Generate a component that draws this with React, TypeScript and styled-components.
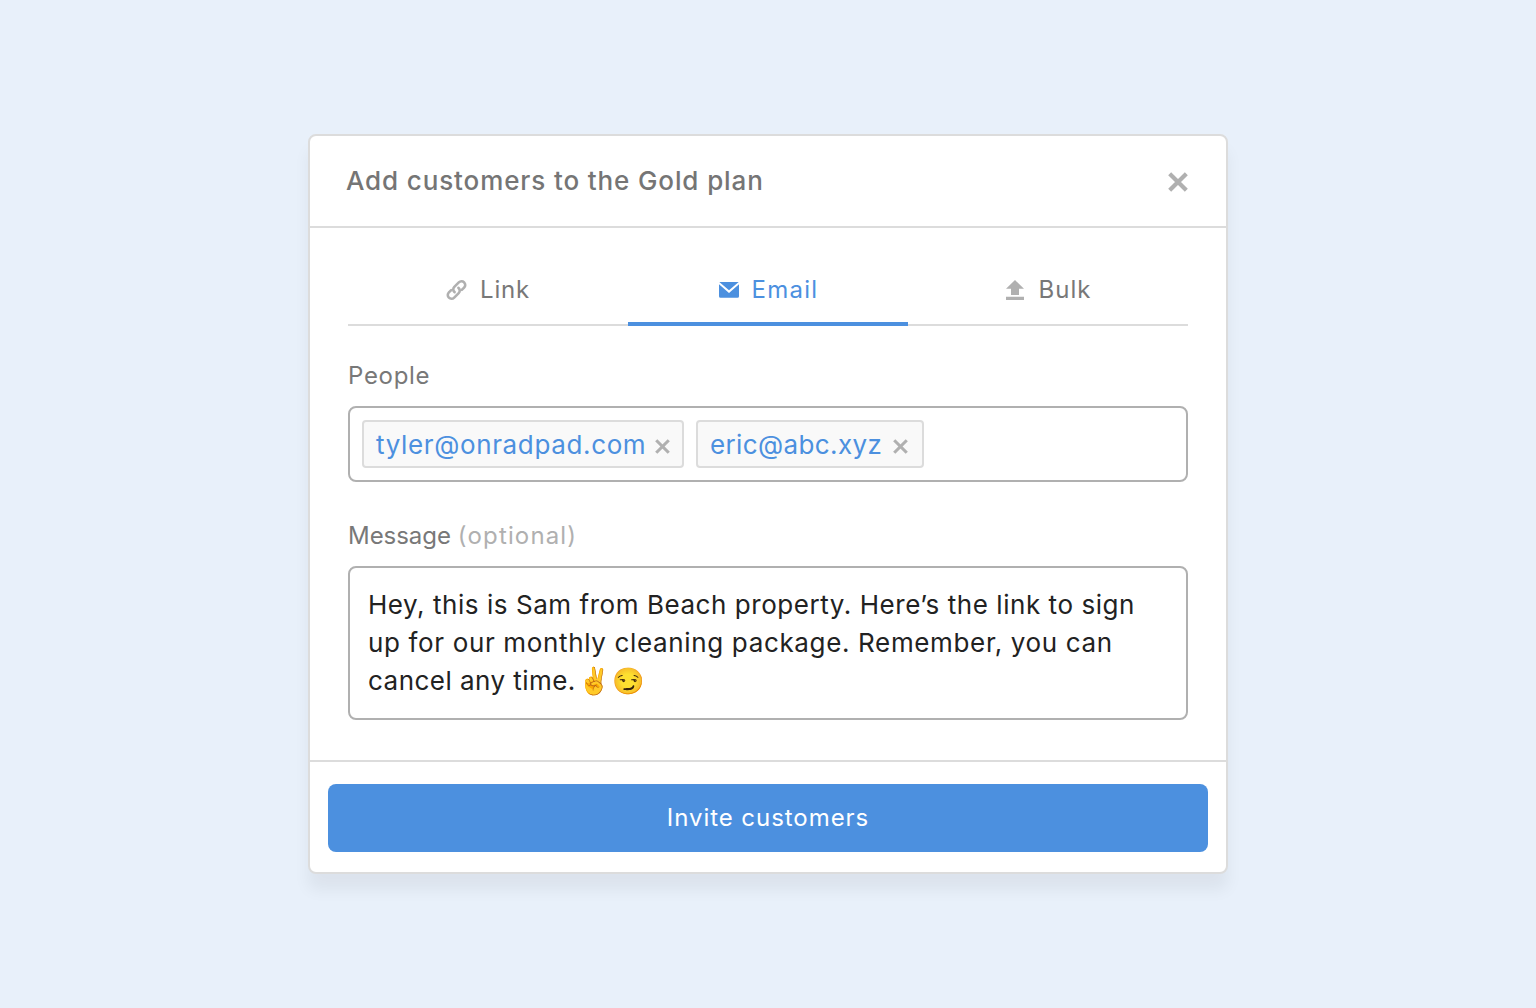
import React, { useState } from "react";
import styled, { createGlobalStyle } from "styled-components";

const blue = "#4c90df";
const gray = "#787878";
const lightGray = "#b0b0b0";
const line = "#dcdcdc";

const GlobalStyle = createGlobalStyle`
  * { box-sizing: border-box; }
  body {
    margin: 0;
    background: #e8f0fa;
    font-family: Inter, "Liberation Sans", "Noto Color Emoji", sans-serif;
    font-weight: 400;
  }
`;

const Page = styled.main`
  min-height: 100vh;
  display: flex;
  align-items: center;
  justify-content: center;
`;

const Modal = styled.section`
  width: 920px;
  border: 2px solid ${line};
  border-radius: 8px;
  background: #fff;
  box-shadow: 0 16px 16px rgba(0, 20, 10, 0.055);
`;

const Header = styled.header`
  display: flex;
  align-items: center;
  justify-content: space-between;
  height: 92px;
  padding: 0 38px 0 36px;
  border-bottom: 2px solid ${line};
`;

const Title = styled.h1`
  margin: 0;
  color: #757575;
  font-size: 26px;
  font-weight: 550;
  letter-spacing: 0.88px;
  line-height: 32px;
`;

const IconButton = styled.button`
  display: flex;
  padding: 0;
  border: 0;
  background: none;
  color: ${lightGray};
  cursor: pointer;
`;

const CloseButton = styled(IconButton)`
  margin-top: 1px;
`;

const Body = styled.div`
  padding: 28px 38px 40px;
`;

const Tabs = styled.nav`
  display: grid;
  grid-template-columns: repeat(3, 1fr);
  height: 70px;
  margin-bottom: 34px;
`;

const Tab = styled.button<{ $active: boolean; $spacing: number }>`
  display: flex;
  align-items: center;
  justify-content: center;
  gap: 12px;
  padding: ${(p) => (p.$active ? "1px 0 0" : "1px 0 2px")};
  border: 0;
  border-bottom: ${(p) => (p.$active ? `4px solid ${blue}` : `2px solid ${line}`)};
  background: none;
  color: ${(p) => (p.$active ? blue : gray)};
  font: 400 24px/32px Inter, "Liberation Sans", sans-serif;
  letter-spacing: ${(p) => p.$spacing}px;
  cursor: pointer;

  svg {
    color: ${(p) => (p.$active ? blue : lightGray)};
  }
`;

const Field = styled.div`
  & + & {
    margin-top: 38px;
  }
`;

const Label = styled.label<{ $spacing: number }>`
  display: flex;
  gap: 7px;
  margin-bottom: 14px;
  color: ${gray};
  font-size: 24px;
  line-height: 32px;
  letter-spacing: ${(p) => p.$spacing}px;
`;

const Optional = styled.span`
  color: ${lightGray};
  letter-spacing: 1.15px;
`;

const TokenInput = styled.div`
  display: flex;
  gap: 12px;
  height: 76px;
  padding: 12px;
  border: 2px solid ${lightGray};
  border-radius: 8px;
`;

const Token = styled.span<{ $width: number; $spacing: number; $end: number }>`
  display: flex;
  align-items: center;
  justify-content: space-between;
  width: ${(p) => p.$width}px;
  padding: 1px ${(p) => p.$end}px 0 12px;
  border: 2px solid ${line};
  border-radius: 4px;
  background: #f9f9f9;
  color: ${blue};
  font-size: 26px;
  line-height: 36px;
  letter-spacing: ${(p) => p.$spacing}px;
  white-space: nowrap;
`;

const TokenRemove = styled(IconButton)`
  margin-top: 3px;
`;

const MessageBox = styled.div`
  height: 154px;
  padding: 18px;
  border: 2px solid ${lightGray};
  border-radius: 8px;
  color: #222;
  font-size: 26px;
  line-height: 38px;
  outline: none;
`;

const MessageLine = styled.div<{ $spacing: number }>`
  height: 38px;
  letter-spacing: ${(p) => p.$spacing}px;
  white-space: nowrap;
`;

const Emoji = styled.span`
  margin-left: 3px;
  font-family: "Noto Color Emoji", sans-serif;
  font-size: 26px;
  line-height: 1;
  letter-spacing: 1px;
`;

const Footer = styled.footer`
  padding: 22px 18px 20px;
  border-top: 2px solid ${line};
`;

const InviteButton = styled.button`
  display: block;
  width: 100%;
  height: 68px;
  padding: 0 0 1px;
  border: 0;
  border-radius: 8px;
  background: ${blue};
  color: #fff;
  font: 400 24px/32px Inter, "Liberation Sans", sans-serif;
  letter-spacing: 0.95px;
  cursor: pointer;
`;

const Cross = ({ size, stroke }: { size: number; stroke: number }) => {
  const a = stroke * 0.4;
  const b = size - a;
  return (
    <svg width={size} height={size} viewBox={`0 0 ${size} ${size}`} aria-hidden="true">
      <path d={`M${a} ${a}L${b} ${b}M${b} ${a}L${a} ${b}`} stroke="currentColor" strokeWidth={stroke} />
    </svg>
  );
};

const LinkIcon = () => (
  <svg width="22" height="22" viewBox="0 0 22 22" fill="none" stroke="currentColor" strokeWidth="2.6" aria-hidden="true">
    <path strokeLinecap="round" d="M8.6 13.1C6.9 11.8 6.8 9.4 8.3 7.9L12.8 3.4C14.3 1.9 16.7 1.9 18.1 3.3C19.6 4.8 19.6 7.1 18.1 8.6L15.8 10.9" />
    <path strokeLinecap="round" d="M12.4 8.9C14.1 10.2 14.2 12.6 12.7 14.1L8.2 18.6C6.7 20.1 4.3 20.1 2.9 18.7C1.4 17.2 1.4 14.9 2.9 13.4L5.2 11.1" />
  </svg>
);

const MailIcon = () => (
  <svg width="22" height="20" viewBox="0 0 22 20" aria-hidden="true">
    <path fill="currentColor" d="M1.3 2H20.7L11 10.2Z M1 4.3L11 13.1L21 4.3V16.2Q21 17.7 19.5 17.7H2.5Q1 17.7 1 16.2Z" />
  </svg>
);

const UploadIcon = () => (
  <svg width="22" height="22" viewBox="0 0 22 22" aria-hidden="true">
    <path fill="currentColor" d="M10 1L19 9.8H14V16H6V9.8H1ZM1 17.8H19V21H1Z" />
  </svg>
);

const tabs = [
  { name: "Link", icon: <LinkIcon />, spacing: 0.8 },
  { name: "Email", icon: <MailIcon />, spacing: 1.25 },
  { name: "Bulk", icon: <UploadIcon />, spacing: 1 },
];

const people = [
  { email: "tyler@onradpad.com", width: 322, spacing: 0.64, end: 12 },
  { email: "eric@abc.xyz", width: 228, spacing: 0.38, end: 14 },
];

export default function App() {
  const [active, setActive] = useState("Email");

  return (
    <>
      <GlobalStyle />
      <Page>
        <Modal role="dialog" aria-labelledby="modal-title">
          <Header>
            <Title id="modal-title">Add customers to the Gold plan</Title>
            <CloseButton aria-label="Close">
              <Cross size={20} stroke={4.2} />
            </CloseButton>
          </Header>
          <Body>
            <Tabs>
              {tabs.map((tab) => (
                <Tab
                  key={tab.name}
                  $active={tab.name === active}
                  $spacing={tab.spacing}
                  onClick={() => setActive(tab.name)}
                >
                  {tab.icon}
                  {tab.name}
                </Tab>
              ))}
            </Tabs>
            <Field>
              <Label $spacing={0.7}>People</Label>
              <TokenInput>
                {people.map((person) => (
                  <Token key={person.email} $width={person.width} $spacing={person.spacing} $end={person.end}>
                    {person.email}
                    <TokenRemove aria-label="Remove">
                      <Cross size={15} stroke={3.1} />
                    </TokenRemove>
                  </Token>
                ))}
              </TokenInput>
            </Field>
            <Field>
              <Label $spacing={-0.05}>
                Message <Optional>(optional)</Optional>
              </Label>
              <MessageBox role="textbox" aria-multiline="true">
                <MessageLine $spacing={0.55}>Hey, this is Sam from Beach property. Here’s the link to sign</MessageLine>
                <MessageLine $spacing={0.65}>up for our monthly cleaning package. Remember, you can</MessageLine>
                <MessageLine $spacing={0.46}>
                  cancel any time.<Emoji>✌️😏</Emoji>
                </MessageLine>
              </MessageBox>
            </Field>
          </Body>
          <Footer>
            <InviteButton>Invite customers</InviteButton>
          </Footer>
        </Modal>
      </Page>
    </>
  );
}
